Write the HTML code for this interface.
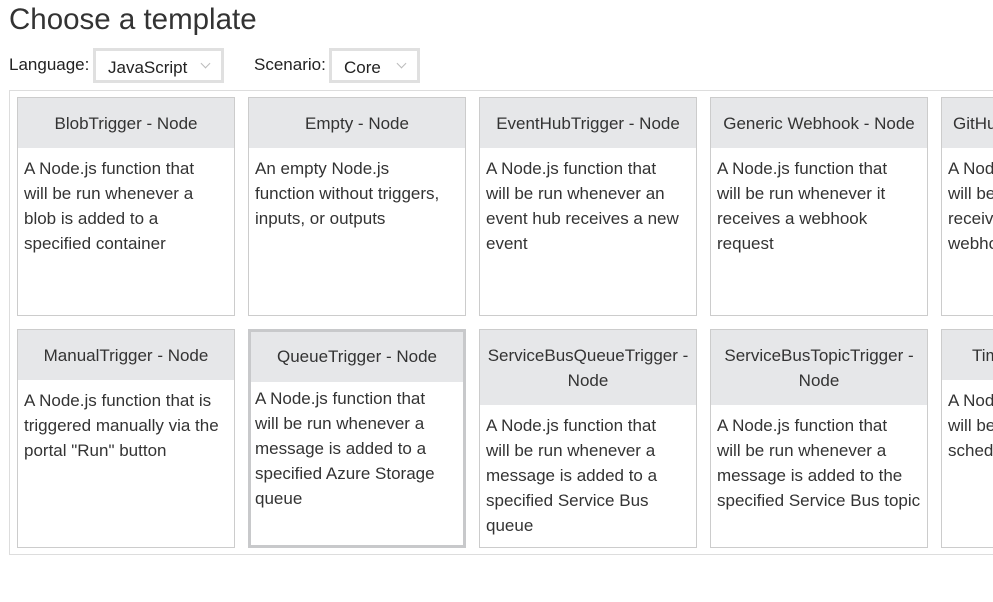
<!DOCTYPE html>
<html><head><meta charset="utf-8"><style>
*{box-sizing:border-box;margin:0;padding:0}
body{width:993px;height:602px;overflow:hidden;background:#fff;font-family:"Liberation Sans",sans-serif;color:#333;position:relative}
h1{position:absolute;left:9px;top:3px;font-size:29.5px;font-weight:normal;color:#333}
.lbl{position:absolute;top:55px;font-size:17px;color:#222}
.sel{position:absolute;top:48px;height:35px;border:3px solid #e0e0e0;font-size:17px;padding:7px 0 0 12px;color:#222}
.sel:after{content:"";position:absolute;right:12px;top:9px;width:6px;height:6px;border-right:1px solid #bbb;border-bottom:1px solid #bbb;transform:rotate(45deg)}
.wrap{position:absolute;left:9px;top:90px;width:1000px;height:465px;border:1px solid #ddd;border-right:none;overflow:hidden}
.card{position:absolute;width:218px;height:219px;border:1px solid #ccc;background:#fff}
.card.s{border:3px solid #c8c9cb}
.hd{background:#e6e7e9;height:50px;text-align:center;font-size:17px;line-height:25px;padding-top:13px;color:#333;white-space:nowrap}
.hd.two{height:75px;padding-top:13px}
.bd{padding:8px 0 0 6px;font-size:17px;line-height:25px;color:#333;white-space:nowrap}
.s .hd{padding-top:12px}
.s .bd{padding:4px 0 0 4px}
</style></head><body>
<h1>Choose a template</h1>
<div class="lbl" style="left:9px">Language:</div>
<div class="sel" style="left:93px;width:131px">JavaScript</div>
<div class="lbl" style="left:254px">Scenario:</div>
<div class="sel" style="left:329px;width:91px">Core</div>
<div class="wrap">
<div class="card" style="left:7px;top:6px"><div class="hd">BlobTrigger - Node</div><div class="bd">A Node.js function that<br>will be run whenever a<br>blob is added to a<br>specified container</div></div>
<div class="card" style="left:238px;top:6px"><div class="hd">Empty - Node</div><div class="bd">An empty Node.js<br>function without triggers,<br>inputs, or outputs</div></div>
<div class="card" style="left:469px;top:6px"><div class="hd">EventHubTrigger - Node</div><div class="bd">A Node.js function that<br>will be run whenever an<br>event hub receives a new<br>event</div></div>
<div class="card" style="left:700px;top:6px"><div class="hd">Generic Webhook - Node</div><div class="bd">A Node.js function that<br>will be run whenever it<br>receives a webhook<br>request</div></div>
<div class="card" style="left:931px;top:6px"><div class="hd" style="text-align:left;padding-left:11px">GitHub Webhook - Node</div><div class="bd">A Node.js function that<br>will be run whenever it<br>receives a GitHub<br>webhook</div></div>
<div class="card" style="left:7px;top:238px"><div class="hd">ManualTrigger - Node</div><div class="bd">A Node.js function that is<br>triggered manually via the<br>portal "Run" button</div></div>
<div class="card s" style="left:238px;top:238px"><div class="hd">QueueTrigger - Node</div><div class="bd">A Node.js function that<br>will be run whenever a<br>message is added to a<br>specified Azure Storage<br>queue</div></div>
<div class="card" style="left:469px;top:238px"><div class="hd two">ServiceBusQueueTrigger -<br>Node</div><div class="bd">A Node.js function that<br>will be run whenever a<br>message is added to a<br>specified Service Bus<br>queue</div></div>
<div class="card" style="left:700px;top:238px"><div class="hd two">ServiceBusTopicTrigger -<br>Node</div><div class="bd">A Node.js function that<br>will be run whenever a<br>message is added to the<br>specified Service Bus topic</div></div>
<div class="card" style="left:931px;top:238px"><div class="hd" style="text-align:left;padding-left:30px">TimerTrigger - Node</div><div class="bd">A Node.js function that<br>will be run on a specified<br>schedule</div></div>
</div>
</body></html>
